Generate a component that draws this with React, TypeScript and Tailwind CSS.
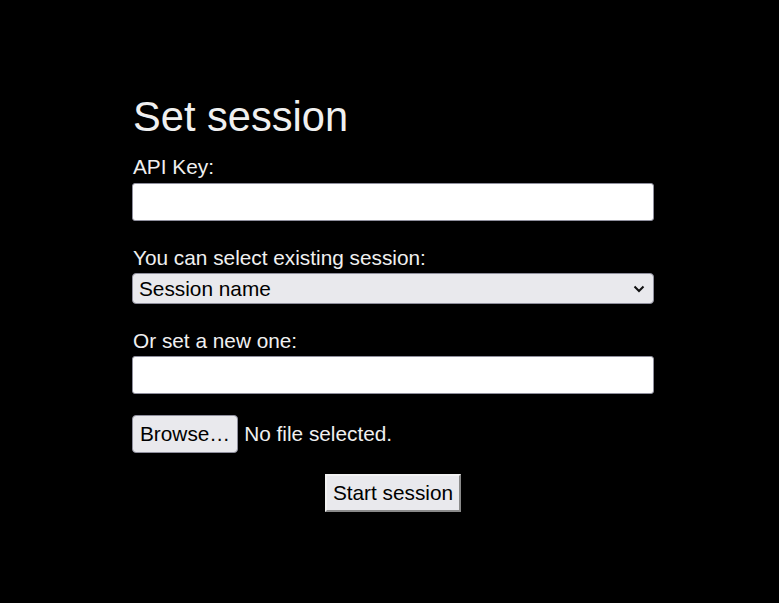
export default function App() {
  return (
    <div className="min-h-[603px] bg-black pl-[132px] pt-[91px] text-[#f0f0f0] font-['Liberation_Sans',Arial,sans-serif]">
      <div className="flex w-[522px] flex-col">
        <h1 className="pl-px text-[41.6px] leading-[52px]">Set session</h1>
        <label className="mt-[12px] pl-px text-[20.8px] leading-[24px]">API Key:</label>
        <input
          type="text"
          className="mt-[4px] h-[38px] w-full rounded-[3px] border border-[#8f8f9d] bg-white px-2 text-[20.8px] text-black outline-none"
        />
        <label className="mt-[25px] pl-px text-[20.8px] leading-[24px]">You can select existing session:</label>
        <div className="mt-[3px] flex h-[31px] w-full items-center justify-between rounded-[4px] border border-[#8f8f9d] bg-[#e9e9ed] pl-[6px] pr-[8px] text-[20.8px] text-black">
          <span className="leading-[24px]">Session name</span>
          <svg width="12" height="8" viewBox="0 0 12 8" fill="none" stroke="#111" strokeWidth="2">
            <path d="M1.5 1.5 L6 6 L10.5 1.5" />
          </svg>
        </div>
        <label className="mt-[25px] pl-px text-[20.8px] leading-[24px]">Or set a new one:</label>
        <input
          type="text"
          className="mt-[3px] h-[38px] w-full rounded-[3px] border border-[#8f8f9d] bg-white px-2 text-[20.8px] text-black outline-none"
        />
        <div className="mt-[21px] flex items-center gap-[6px]">
          <button className="h-[38px] rounded-[4px] border border-[#8f8f9d] bg-[#e9e9ed] px-[7px] text-[20.8px] text-black">
            Browse…
          </button>
          <span className="text-[20.8px]">No file selected.</span>
        </div>
        <div className="mt-[21px] flex justify-center">
          <button className="h-[38px] border-2 border-t-[#f3f3f3] border-l-[#f3f3f3] border-b-[#8a8a8a] border-r-[#8a8a8a] bg-[#e9e9ed] px-[6px] text-[20.8px] text-black">
            Start session
          </button>
        </div>
      </div>
    </div>
  )
}
